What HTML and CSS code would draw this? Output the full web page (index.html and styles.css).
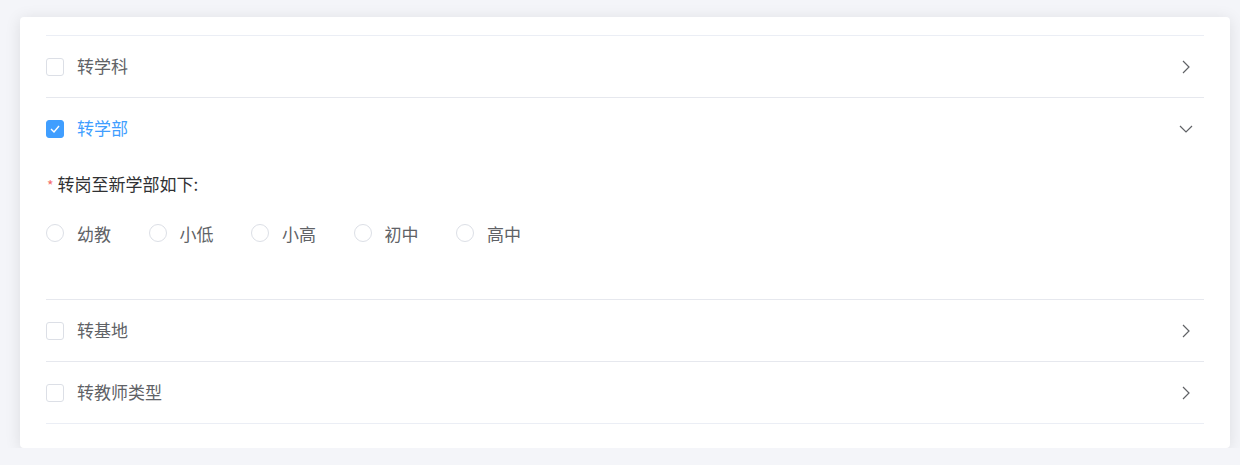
FILE: index.html
```html
<!DOCTYPE html>
<html>
<head>
  <meta charset="utf-8">
  <title>转岗类型</title>
  <link rel="stylesheet" href="styles.css">
</head>
<body>
  <div class="page">
    <div class="card">
      <div class="collapse">
        <div class="item">
          <div class="item-header">
            <span class="checkbox"></span>
            <span class="item-title">转学科</span>
            <svg class="arrow" width="14" height="14" viewBox="0 0 14 14"><path d="M4 1 L10 7 L4 13" /></svg>
          </div>
        </div>

        <div class="item active">
          <div class="item-header">
            <span class="checkbox checked">
              <svg width="10" height="8" viewBox="0 0 10 8"><path d="M1 4 L4 7 L9 1" /></svg>
            </span>
            <span class="item-title">转学部</span>
            <svg class="arrow" width="14" height="14" viewBox="0 0 14 14"><path d="M1 4 L7 10 L13 4" /></svg>
          </div>
          <div class="item-content">
            <div class="form-label"><span class="required">*</span>转岗至新学部如下:</div>
            <div class="radio-group">
              <label class="radio"><span class="radio-circle"></span><span class="radio-text">幼教</span></label>
              <label class="radio"><span class="radio-circle"></span><span class="radio-text">小低</span></label>
              <label class="radio"><span class="radio-circle"></span><span class="radio-text">小高</span></label>
              <label class="radio"><span class="radio-circle"></span><span class="radio-text">初中</span></label>
              <label class="radio"><span class="radio-circle"></span><span class="radio-text">高中</span></label>
            </div>
          </div>
        </div>

        <div class="item">
          <div class="item-header">
            <span class="checkbox"></span>
            <span class="item-title">转基地</span>
            <svg class="arrow" width="14" height="14" viewBox="0 0 14 14"><path d="M4 1 L10 7 L4 13" /></svg>
          </div>
        </div>

        <div class="item">
          <div class="item-header">
            <span class="checkbox"></span>
            <span class="item-title">转教师类型</span>
            <svg class="arrow" width="14" height="14" viewBox="0 0 14 14"><path d="M4 1 L10 7 L4 13" /></svg>
          </div>
        </div>
      </div>
    </div>
  </div>
</body>
</html>
```

FILE: styles.css
```css
body {
  margin: 0;
  background-color: #f4f5f9;
  font-family: "Noto Sans CJK SC", "Noto Sans", sans-serif;
}

.page {
  padding: 17px 10px 0 20px;
}

.card {
  background-color: #fff;
  border-radius: 4px;
  box-shadow: 0 2px 16px 0 rgba(0, 0, 0, 0.1);
  padding: 18px 26px 24px 26px;
}

.collapse {
  border-top: 1px solid #ebeef5;
}

.item-header {
  display: flex;
  align-items: center;
  height: 61px;
  border-bottom: 1px solid #e6e8ee;
}

.item:last-child .item-header {
  border-bottom-color: #ebeef5;
}

.item.active .item-header {
  border-bottom-color: transparent;
}

.item-content {
  border-bottom: 1px solid #e6e8ee;
  padding: 12px 0 54px 0;
}

.checkbox {
  width: 16px;
  height: 16px;
  border: 1px solid #dcdfe6;
  border-radius: 3px;
  background-color: #fff;
  display: flex;
  align-items: center;
  justify-content: center;
  flex-shrink: 0;
}

.checkbox.checked {
  background-color: #409eff;
  border-color: #409eff;
}

.checkbox.checked path {
  fill: none;
  stroke: #fff;
  stroke-width: 1.4;
}

.item-title {
  margin-left: 13px;
  padding-bottom: 3px;
  font-size: 17px;
  color: #606266;
  flex: 1;
}

.item.active .item-title {
  color: #409eff;
}

.arrow {
  margin-right: 11px;
}

.arrow path {
  fill: none;
  stroke: #606266;
  stroke-width: 1.2;
}

.form-label {
  font-size: 17px;
  line-height: 24px;
  color: #303133;
}

.required {
  color: #f56c6c;
  font-size: 14px;
  margin: 0 4px 0 1px;
}

.radio-group {
  display: flex;
  gap: 37.5px;
  margin-top: 24px;
}

.radio {
  display: flex;
  align-items: center;
  height: 24px;
  font-size: 17px;
  color: #606266;
}

.radio-text {
  padding-top: 1px;
}

.radio-circle {
  width: 16px;
  height: 16px;
  border: 1px solid #dcdfe6;
  border-radius: 50%;
  margin-right: 13px;
}
```
